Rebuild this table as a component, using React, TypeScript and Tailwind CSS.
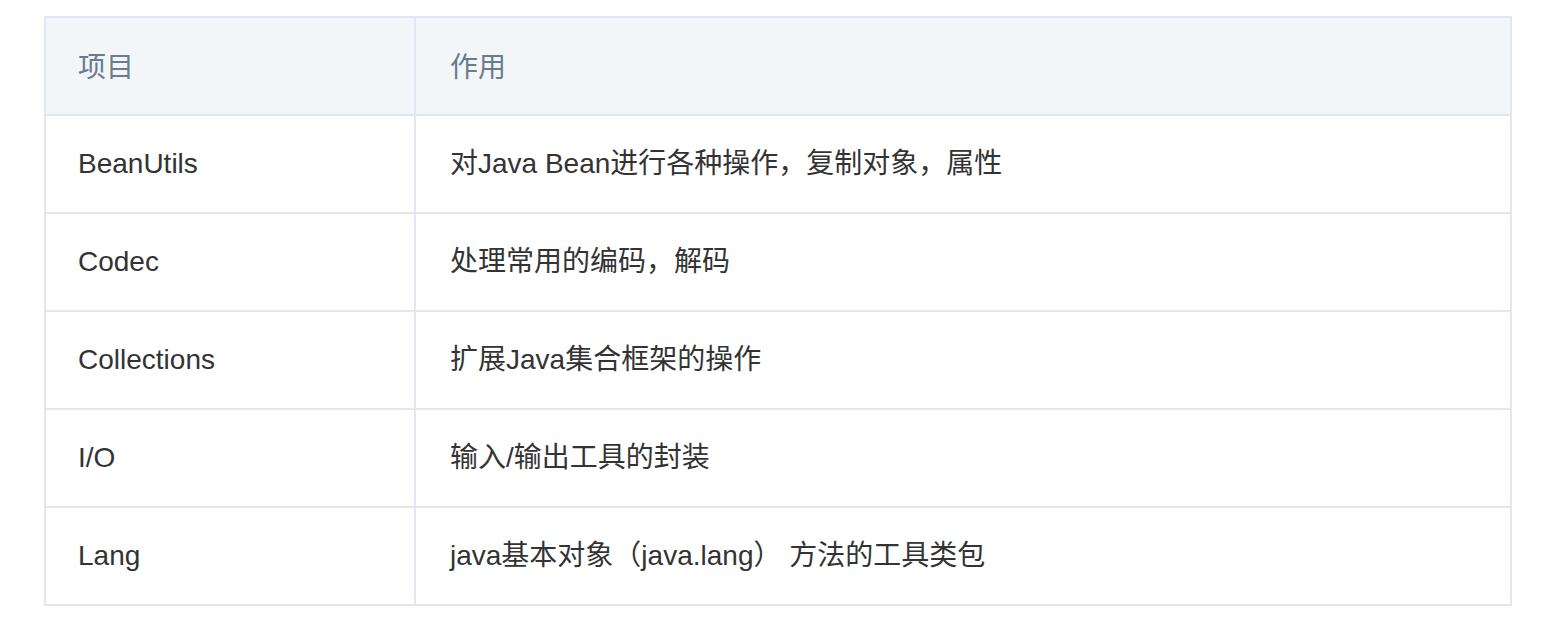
import React from "react";

const rows: [string, string][] = [
  ["BeanUtils", "对Java Bean进行各种操作，复制对象，属性"],
  ["Codec", "处理常用的编码，解码"],
  ["Collections", "扩展Java集合框架的操作"],
  ["I/O", "输入/输出工具的封装"],
  ["Lang", "java基本对象（java.lang） 方法的工具类包"],
];

export default function App() {
  return (
    <div
      className="w-[1542px] h-[634px] bg-white pt-[16px] pl-[44px]"
      style={{ fontFamily: '"Liberation Sans", "Noto Sans CJK SC", sans-serif' }}
    >
      <div className="w-[1468px] border-2 border-[#e2e6f0] text-[28px]">
        <div className="flex h-[96px] bg-[#f3f6f9] text-[#6b7a8f]">
          <div className="w-[370px] border-r-2 border-[#e2e6f0] flex items-center pl-8 pt-[3px]">项目</div>
          <div className="flex-1 flex items-center pl-[34px] pt-[3px]">作用</div>
        </div>
        {rows.map(([a, b]) => (
          <div key={a} className="flex h-[98px] border-t-2 border-[#e2e6f0] text-[#333333]">
            <div className="w-[370px] border-r-2 border-[#e2e6f0] flex items-center pl-8">{a}</div>
            <div className="flex-1 flex items-center pl-[34px] whitespace-pre">{b}</div>
          </div>
        ))}
      </div>
    </div>
  );
}
